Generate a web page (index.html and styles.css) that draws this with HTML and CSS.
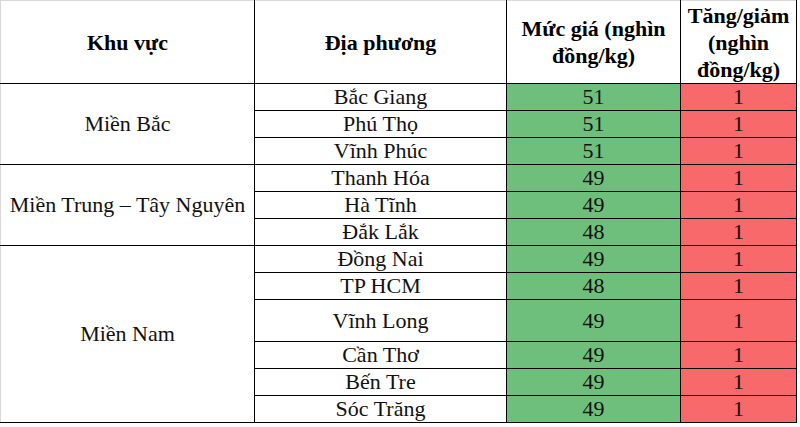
FILE: index.html
```html
<!DOCTYPE html>
<html lang="vi">
<head>
<meta charset="utf-8">
<title>Giá lợn hơi</title>
<link rel="stylesheet" href="styles.css">
</head>
<body>
<table class="tbl">
  <colgroup>
    <col class="c1"><col class="c2"><col class="c3"><col class="c4">
  </colgroup>
  <tr class="hd">
    <th class="first">Khu vực</th>
    <th>Địa phương</th>
    <th>Mức giá (nghìn<br>đồng/kg)</th>
    <th>Tăng/giảm<br>(nghìn<br>đồng/kg)</th>
  </tr>
  <tr>
    <td class="region first" rowspan="3">Miền Bắc</td>
    <td>Bắc Giang</td><td class="price">51</td><td class="change">1</td>
  </tr>
  <tr><td>Phú Thọ</td><td class="price">51</td><td class="change">1</td></tr>
  <tr><td>Vĩnh Phúc</td><td class="price">51</td><td class="change">1</td></tr>
  <tr>
    <td class="region first" rowspan="3">Miền Trung – Tây Nguyên</td>
    <td>Thanh Hóa</td><td class="price">49</td><td class="change">1</td>
  </tr>
  <tr><td>Hà Tĩnh</td><td class="price">49</td><td class="change">1</td></tr>
  <tr><td>Đắk Lắk</td><td class="price">48</td><td class="change">1</td></tr>
  <tr>
    <td class="region first" rowspan="6">Miền Nam</td>
    <td>Đồng Nai</td><td class="price">49</td><td class="change">1</td>
  </tr>
  <tr><td>TP HCM</td><td class="price">48</td><td class="change">1</td></tr>
  <tr class="tall"><td>Vĩnh Long</td><td class="price">49</td><td class="change">1</td></tr>
  <tr><td>Cần Thơ</td><td class="price">49</td><td class="change">1</td></tr>
  <tr class="short"><td>Bến Tre</td><td class="price">49</td><td class="change">1</td></tr>
  <tr><td>Sóc Trăng</td><td class="price">49</td><td class="change">1</td></tr>
</table>
</body>
</html>
```

FILE: styles.css
```css
html, body {
  margin: 0;
  padding: 0;
  background: #ffffff;
}

.tbl {
  border-collapse: collapse;
  table-layout: fixed;
  width: 796px;
  font-family: "Liberation Serif", "Times New Roman", Tinos, "DejaVu Serif", serif;
  font-size: 22px;
  color: #111111;
}

.tbl th,
.tbl td {
  font-family: "Liberation Serif", "Times New Roman", Tinos, "DejaVu Serif", serif;
}

.c1 { width: 254px; }
.c2 { width: 252px; }
.c3 { width: 174px; }
.c4 { width: 116px; }

.tbl th,
.tbl td {
  border: 1px solid #000000;
  padding: 0;
  text-align: center;
  vertical-align: middle;
  line-height: 26px;
  white-space: nowrap;
}

.tbl tr {
  height: 27px;
}

.tbl tr.hd {
  height: 83px;
}

.tbl tr.tall {
  height: 42px;
}

.tbl tr.short {
  height: 26px;
}

.tbl th {
  font-weight: bold;
  line-height: 27px;
  color: #000000;
}

.tbl tr.hd th {
  border-top: 1px solid #d8d8d8;
}

.tbl .first {
  border-left: 1px solid #d8d8d8;
}

.price {
  background: #6dbf7b;
}

.change {
  background: #f7696b;
}
```
